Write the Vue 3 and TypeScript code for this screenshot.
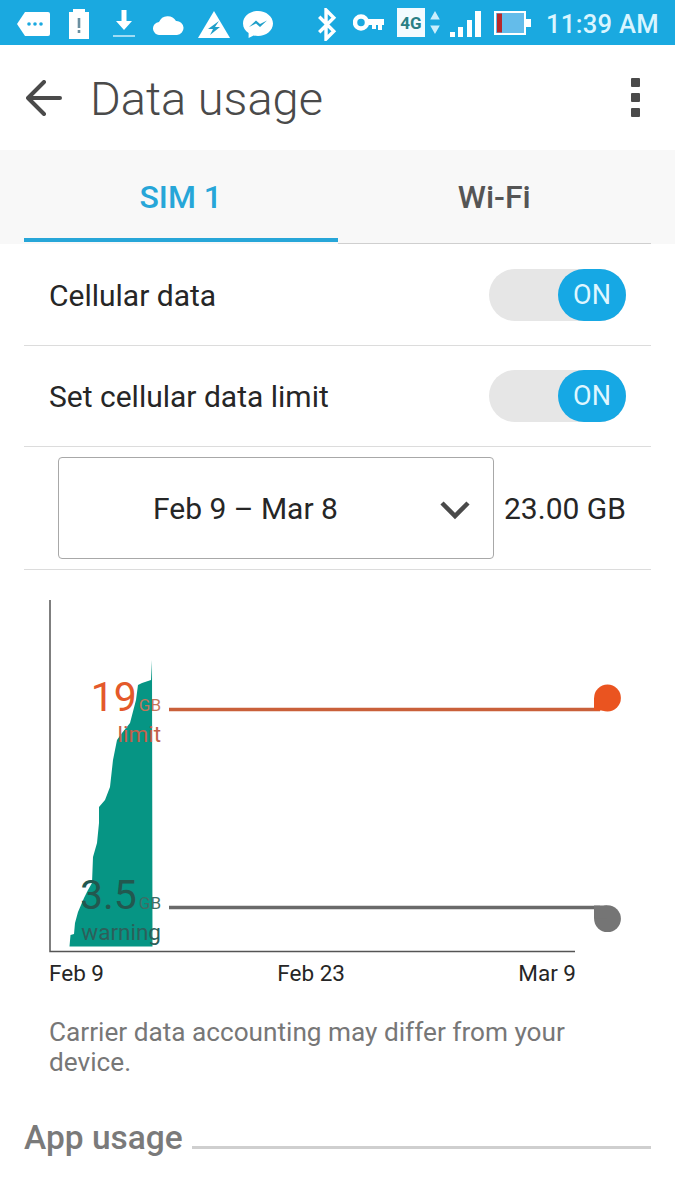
<script setup lang="ts">
const areaPoints = "69.5,946.5 70.5,935 74,934 75,923 78,912 81,905 84,898 88,890 92,883 93,857 97,843 99,823 99,807 105,800 110,787 113,760 117,740 122,733 130,723 136,700 138,685 142,683 151,680 152,660 152.5,946.5";
</script>

<template>
  <div class="page">
    <header class="status">
      <div class="status-left">
        <svg class="i-msg" width="33" height="26" viewBox="0 0 33 26"><path d="M8 1h23a2 2 0 0 1 2 2v20a2 2 0 0 1-2 2H8L0 13z" fill="#fff"/><circle cx="12" cy="13" r="1.8" fill="#1aa9e0"/><circle cx="18" cy="13" r="1.8" fill="#1aa9e0"/><circle cx="24" cy="13" r="1.8" fill="#1aa9e0"/></svg>
        <svg class="i-bat" width="20" height="30" viewBox="0 0 20 30"><path d="M4 0h12v3h4v27H0V3h4z" fill="#fff"/><rect x="8.7" y="9" width="2.6" height="10" fill="#6b8fa0"/><rect x="8.7" y="21" width="2.6" height="3" fill="#6b8fa0"/></svg>
        <svg class="i-down" width="22" height="28" viewBox="0 0 22 28"><path d="M8.5 0h5v11h5.5L11 20 3 11h5.5z" fill="#fff"/><rect x="0" y="25" width="22" height="2" fill="#9fdcf4"/></svg>
        <svg class="i-cloud" width="31" height="21" viewBox="0 0 31 21"><path d="M7 21a6.5 6.5 0 0 1-1-13A9.500 9.500 0 0 1 23 7a7 7 0 0 1 1 14z" fill="#fff"/></svg>
        <svg class="i-tri" width="32" height="27" viewBox="0 0 32 27"><path d="M16 0 32 27H0z" fill="#fff"/><path d="M21 10 10 18h5l-3 6 10-8h-5z" fill="#1f9fc9"/></svg>
        <svg class="i-fb" width="30" height="27" viewBox="0 0 30 27"><path d="M15 0C7 0 0 5.500 0 12.500c0 4 2.200 7.400 5.600 9.600V27l5-2.500c1.400.4 2.900.5 4.400.5 8 0 15-5.500 15-12.500S23 0 15 0z" fill="#fff"/><path d="m6 16 7-6.500 4 3.500 7-3.500-7 6.500-4-3.500z" fill="#1f9fc9"/></svg>
        <svg class="i-bt" width="22" height="33" viewBox="0 0 22 34"><path d="M3 9l15 15-8 8V2l8 8L3 25" fill="none" stroke="#fff" stroke-width="3.5"/></svg>
      </div>
      <div class="status-right">
        <svg class="i-key" width="31" height="17" viewBox="0 0 31 17"><circle cx="8" cy="8.500" r="6" fill="none" stroke="#fff" stroke-width="4.5"/><path d="M13 5h18v6h-2v5h-4v-5h-2v4h-4v-4h-6z" fill="#fff"/></svg>
        <span class="four-g">4G</span>
        <svg class="i-arrows" width="10" height="25" viewBox="0 0 10 26"><path d="M5 1l5 9H0zM0 16h10l-5 9z" fill="#c9eefc"/></svg>
        <svg class="i-signal" width="31" height="27" viewBox="0 0 31 27"><rect x="0" y="21" width="5" height="5" fill="#fff"/><rect x="8" y="16" width="5" height="10" fill="#fff"/><rect x="17" y="9" width="5" height="17" fill="#fff"/><rect x="25" y="0" width="6" height="26" fill="#fff"/></svg>
        <svg class="i-cell" width="37" height="24" viewBox="0 0 37 24"><rect x="1" y="1" width="30" height="22" fill="#64bcea" stroke="#fff" stroke-width="2"/><rect x="3" y="2.5" width="5" height="19" fill="#b8282a"/><rect x="31" y="8" width="6" height="8" fill="#fff"/></svg>
        <span class="clock">11:39 AM</span>
      </div>
    </header>

    <div class="appbar">
      <svg class="back" width="36" height="36" viewBox="0 0 36 36"><path d="M18 2 2 18l16 16M2 18h32" fill="none" stroke="#4a4a4a" stroke-width="4" stroke-linecap="round" stroke-linejoin="round"/></svg>
      <h1 class="title">Data usage</h1>
      <div class="more"><i></i><i></i><i></i></div>
    </div>

    <nav class="tabs">
      <div class="tab active">SIM 1</div>
      <div class="tab">Wi-Fi</div>
    </nav>

    <main class="content">
      <div class="row">
        <span>Cellular data</span>
        <div class="switch"><span class="knob">ON</span></div>
      </div>
      <div class="row">
        <span>Set cellular data limit</span>
        <div class="switch"><span class="knob">ON</span></div>
      </div>
      <div class="cycle-row">
        <div class="select">
          <span>Feb 9 – Mar 8</span>
          <svg class="chev" width="32" height="20" viewBox="0 0 32 20"><path d="M3 3l13 13L29 3" fill="none" stroke="#4a4a4a" stroke-width="4.5"/></svg>
        </div>
        <span class="amount">23.00 GB</span>
      </div>

      <section class="chart">
        <svg class="chart-art" width="675" height="400" viewBox="0 570 675 400">
          <polygon :points="areaPoints" fill="#069584" />
          <path d="M50 600V951.5H575" fill="none" stroke="#555" stroke-width="1.5"/>
          <path d="M169 709.500H600" stroke="#c9603a" stroke-width="3.5"/>
          <circle cx="607.5" cy="698" r="13.4" fill="#ea5420"/>
          <rect x="594" y="698" width="13" height="12.5" fill="#ea5420"/>
          <path d="M169 907.500H600" stroke="#6a6a6a" stroke-width="3.5"/>
          <circle cx="607.5" cy="918.7" r="13.4" fill="#757575"/>
          <rect x="594" y="905.5" width="13" height="13" fill="#757575"/>
        </svg>
        <div class="mark limit">
          <div><b>19</b><small>GB</small></div>
          <em>limit</em>
        </div>
        <div class="mark warning">
          <div><b>3.5</b><small>GB</small></div>
          <em>warning</em>
        </div>
        <div class="dates">
          <span>Feb 9</span><span>Feb 23</span><span>Mar 9</span>
        </div>
      </section>

      <p class="note">Carrier data accounting may differ from your device.</p>

      <div class="section-head">
        <span>App usage</span>
        <i></i>
      </div>
    </main>
  </div>
</template>

<style>
html, body { margin: 0; background: #fff; }
</style>

<style scoped>
.page {
  width: 675px;
  height: 1200px;
  overflow: hidden;
  background: #fff;
  font-family: Roboto, "Liberation Sans", sans-serif;
  color: #262626;
}
.status {
  height: 45px;
  background: #1aa9e0;
  display: flex;
  align-items: center;
  justify-content: space-between;
  padding: 3px 16px 0 17px;
  box-sizing: border-box;
}
.status-left, .status-right { display: flex; align-items: center; }
.i-bat { margin-left: 19px; }
.i-down { margin-left: 24px; }
.i-cloud { margin-left: 18px; }
.i-tri { margin-left: 14px; }
.i-fb { margin-left: 13px; }
.i-bt { margin-left: 43px; }
.i-key { margin-top: -3px; }
.four-g {
  width: 28px;
  height: 29px;
  margin: -3px 0 0 13px;
  background: #f3fbff;
  color: #2a7f85;
  font-size: 17px;
  font-weight: 700;
  display: flex;
  align-items: center;
  justify-content: center;
}
.i-arrows { margin: -3px 0 0 5px; }
.i-signal { margin-left: 10px; }
.i-cell { margin: -2px 0 0 13px; }
.clock {
  color: #d9f5ff;
  font-size: 25.6px;
  font-weight: 500;
  white-space: nowrap;
  letter-spacing: .3px;
  margin-left: 15px;
}
.appbar {
  height: 105px;
  display: flex;
  align-items: center;
  padding: 0 35px 0 26px;
  box-sizing: border-box;
}
.back { margin-top: 1px; }
.title {
  margin: 2px 0 0 28px;
  font-size: 47px;
  font-weight: 300;
  color: #4a4a4a;
  flex: 1;
  line-height: 1;
}
.more { display: flex; flex-direction: column; gap: 6px; }
.more i { display: block; width: 9px; height: 9px; background: #4a4a4a; border-radius: 1px; }
.tabs {
  height: 94px;
  padding: 0 24px;
  background: #f8f8f8;
  display: flex;
  align-items: flex-start;
  box-sizing: border-box;
}
.tab {
  width: 313.5px;
  text-align: center;
  font-size: 32px;
  font-weight: 500;
  line-height: 94px;
  color: #555;
  border-bottom: 1.5px solid #cfcfcf;
  height: 94px;
  box-sizing: border-box;
}
.tab.active { color: #27a6d8; border-bottom: 4px solid #27a6d8; height: 92px; }
.content { padding: 1px 24px 0; }
.row {
  height: 101px;
  padding: 0 25px 0 25px;
  box-sizing: border-box;
  border-bottom: 1px solid #dcdcdc;
  display: flex;
  align-items: center;
  justify-content: space-between;
  font-size: 30px;
}
.switch {
  width: 137px;
  height: 52px;
  border-radius: 26px;
  background: #e6e6e6;
  display: flex;
  justify-content: flex-end;
}
.knob {
  width: 68px;
  height: 52px;
  border-radius: 26px;
  background: #16a8e4;
  color: #dff6ff;
  font-size: 27px;
  display: flex;
  align-items: center;
  justify-content: center;
}
.cycle-row {
  height: 123px;
  box-sizing: border-box;
  border-bottom: 1px solid #dcdcdc;
  display: flex;
  align-items: center;
  padding: 0 24px 0 34px;
}
.select {
  width: 436px;
  height: 102px;
  box-sizing: border-box;
  border: 1.5px solid #a8a8a8;
  border-radius: 4px;
  display: flex;
  align-items: center;
  position: relative;
  font-size: 30px;
  padding-left: 94px;
}
.chev { position: absolute; right: 22px; top: 42px; }
.amount { margin-left: 10px; font-size: 30px; white-space: nowrap; }
.chart { height: 447px; position: relative; margin: 0 -24px; }
.chart-art { display: block; position: absolute; left: 0; top: 0; }
.mark { position: absolute; right: 514px; text-align: right; line-height: 1; white-space: nowrap; }
.mark b { font-weight: 400; font-size: 41px; margin-right: 2px; }
.mark small { font-size: 17px; }
.mark em { display: block; font-style: normal; font-size: 22.5px; margin-top: 5px; }
.limit { top: 107px; color: #e4592a; }
.limit small { color: #c4755a; }
.limit em { color: #c4604a; }
.warning { top: 305px; color: #22584f; }
.warning small { color: #3f6d65; }
.warning em { color: #2d5f5a; }
.dates {
  position: absolute;
  left: 49px;
  width: 527px;
  top: 390px;
  display: flex;
  justify-content: space-between;
  font-size: 22.5px;
  line-height: 26px;
}
.note {
  margin: 0;
  padding: 0 60px 0 25px;
  font-size: 26.2px;
  line-height: 30px;
  color: #777;
}
.section-head {
  margin-top: 42px;
  display: flex;
  align-items: center;
  gap: 9px;
  font-size: 33.5px;
  font-weight: 500;
  color: #7a7a7a;
  line-height: 38px;
}
.section-head i { flex: 1; height: 3px; background: #cfcfcf; margin-top: 18px; }
</style>
